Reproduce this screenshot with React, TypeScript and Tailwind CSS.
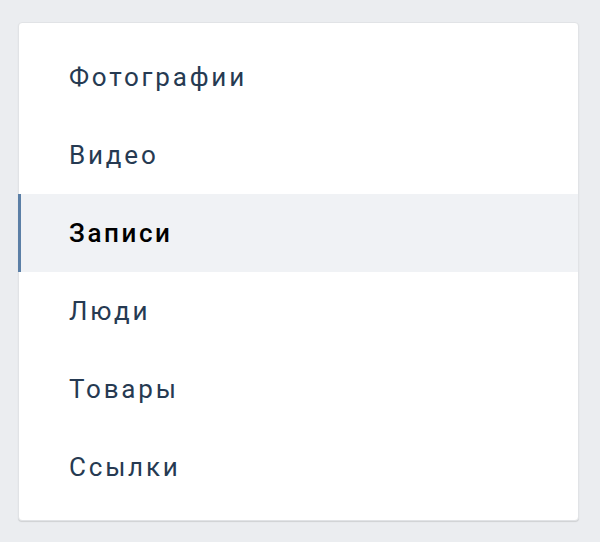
import React from "react";

const items = ["Фотографии", "Видео", "Записи", "Люди", "Товары", "Ссылки"];

export default function App() {
  return (
    <div
      className="w-[600px] h-[542px] bg-[#ebedf0] pt-[22px] pl-[18px]"
      style={{ fontFamily: "Roboto, 'Noto Sans', sans-serif" }}
    >
      <div className="w-[561px] h-[499px] bg-white rounded-[4px] border border-[#e1e3e6] shadow-[0_1px_1px_rgba(0,0,0,0.12)] py-[15px]">
        {items.map((t) => {
          const active = t === "Записи";
          return (
            <div
              key={t}
              className={
                active
                  ? "h-[78px] flex items-center pl-[48px] bg-[#f0f2f5] border-l-[3px] border-[#5b7fa6] -ml-px text-[#000] font-medium text-[26px] tracking-[2.6px]"
                  : "h-[78px] flex items-center pl-[50px] text-[#263a52] text-[26px] tracking-[2.8px]"
              }
            >
              {t}
            </div>
          );
        })}
      </div>
    </div>
  );
}
